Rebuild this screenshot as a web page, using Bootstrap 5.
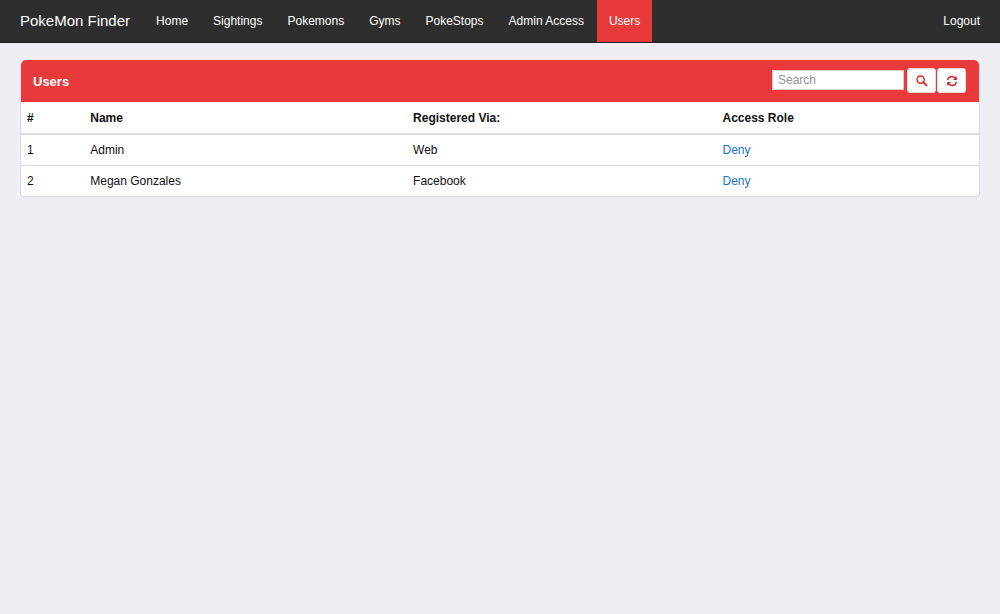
<!DOCTYPE html>
<html lang="en">
<head>
<meta charset="utf-8">
<meta name="viewport" content="width=device-width, initial-scale=1">
<title>PokeMon Finder - Users</title>
<link href="https://cdn.jsdelivr.net/npm/bootstrap@5.3.0/dist/css/bootstrap.min.css" rel="stylesheet">
<style>
  :root { --brand-red: #e83a3a; }
  body {
    font-family: "Liberation Sans", Arial, sans-serif;
    font-size: 12px;
    line-height: 18px;
    color: #111;
    background: #efeef4;
  }
  .topbar {
    --bs-navbar-padding-y: 0;
    background: #2e2e2e;
    border-bottom: 1px solid #231f23;
  }
  .topbar .navbar-brand {
    font-size: 15px;
    line-height: 18px;
    color: #fff;
    margin-right: 14px;
    padding: 12px 0;
  }
  .topbar .navbar-nav { --bs-navbar-nav-link-padding-x: 12px; gap: 1px; }
  .topbar .nav-link {
    color: #fff;
    font-size: 12px;
    line-height: 18px;
    padding-top: 12px;
    padding-bottom: 12px;
  }
  .topbar .nav-link.active { background: var(--brand-red); color: #fff; }
  .page { padding: 17px 20px; }
  .panel { border: 1px solid #dcdce0; border-top: 0; border-radius: 4px; }
  .panel-top { background: var(--brand-red); padding: 8px 13px 8px 12px; border-bottom: 0; min-height: 42px; }
  .panel-title { font-size: 13px; line-height: 18px; font-weight: 700; color: #fff; padding-top: 5px; }
  .search-form { gap: 1px; }
  .search-box {
    width: 132px;
    height: 20px;
    min-height: 0;
    padding: 0 5px;
    margin: 2px 2px 0 0;
    font-size: 12px;
    line-height: 18px;
    border: 1px solid #d9c9c9;
    border-radius: 0;
  }
  .search-box::placeholder { color: #949494; }
  .tool-btn {
    width: 29px;
    height: 25px;
    padding: 0;
    background: #fff;
    border: 1px solid #ddd;
    border-radius: 3px;
    color: #e02020;
  }
  .tool-btn:hover { background: #f3f3f3; color: #e02020; }
  .user-table { --bs-table-color: #111; border-color: #ddd; table-layout: fixed; }
  .user-table th, .user-table td { padding: 6px; }
  .user-table thead th { padding-top: 7px; border-bottom-width: 2px; }
  .user-table tbody tr:last-child td { border-bottom: 0; }
  .user-table a { color: #1a74c9; }
  .w-num { width: 6.6%; }
  .w-name { width: 33.7%; }
  .w-via { width: 32.3%; }
</style>
</head>
<body>
<nav class="navbar navbar-expand topbar">
  <div class="container-fluid px-0 ps-1">
    <a class="navbar-brand ms-3" href="#">PokeMon Finder</a>
    <ul class="navbar-nav">
      <li class="nav-item"><a class="nav-link" href="#">Home</a></li>
      <li class="nav-item"><a class="nav-link" href="#">Sightings</a></li>
      <li class="nav-item"><a class="nav-link" href="#">Pokemons</a></li>
      <li class="nav-item"><a class="nav-link" href="#">Gyms</a></li>
      <li class="nav-item"><a class="nav-link" href="#">PokeStops</a></li>
      <li class="nav-item"><a class="nav-link text-nowrap" href="#">Admin Access</a></li>
      <li class="nav-item"><a class="nav-link active" aria-current="page" href="#">Users</a></li>
    </ul>
    <ul class="navbar-nav ms-auto pe-2">
      <li class="nav-item"><a class="nav-link" href="#">Logout</a></li>
    </ul>
  </div>
</nav>

<main class="page">
  <section class="card panel overflow-hidden">
    <div class="card-header panel-top d-flex justify-content-between align-items-start">
      <h1 class="panel-title mb-0">Users</h1>
      <form class="search-form d-flex align-items-start" role="search">
        <input class="form-control search-box" type="search" placeholder="Search" aria-label="Search">
        <button class="btn tool-btn d-flex align-items-center justify-content-center" type="submit" aria-label="Search">
          <svg width="12" height="12" viewBox="0 0 12 12" fill="none" stroke="currentColor" aria-hidden="true">
            <circle cx="4.6" cy="4.6" r="3.6" stroke-width="1.4"/>
            <path d="M7.4 7.4 10.4 10.4" stroke-width="1.9" stroke-linecap="round"/>
          </svg>
        </button>
        <button class="btn tool-btn d-flex align-items-center justify-content-center" type="button" aria-label="Refresh">
          <svg width="12" height="12" viewBox="0 0 12 12" fill="none" stroke="currentColor" stroke-width="1.4" aria-hidden="true">
            <path d="M1.6 5.2A4.3 4.3 0 0 1 9.2 3.2M10.4 6.8A4.3 4.3 0 0 1 2.8 8.8"/>
            <path d="M10.9 1V4.9H7ZM1.1 11V7.1H5Z" fill="currentColor" stroke="none"/>
          </svg>
        </button>
      </form>
    </div>
    <table class="table user-table mb-0">
      <thead>
        <tr>
          <th class="w-num" scope="col">#</th>
          <th class="w-name" scope="col">Name</th>
          <th class="w-via" scope="col">Registered Via:</th>
          <th scope="col">Access Role</th>
        </tr>
      </thead>
      <tbody>
        <tr><td>1</td><td>Admin</td><td>Web</td><td><a class="text-decoration-none" href="#">Deny</a></td></tr>
        <tr><td>2</td><td>Megan Gonzales</td><td>Facebook</td><td><a class="text-decoration-none" href="#">Deny</a></td></tr>
      </tbody>
    </table>
  </section>
</main>
<script src="https://cdn.jsdelivr.net/npm/bootstrap@5.3.0/dist/js/bootstrap.bundle.min.js"></script>
</body>
</html>
